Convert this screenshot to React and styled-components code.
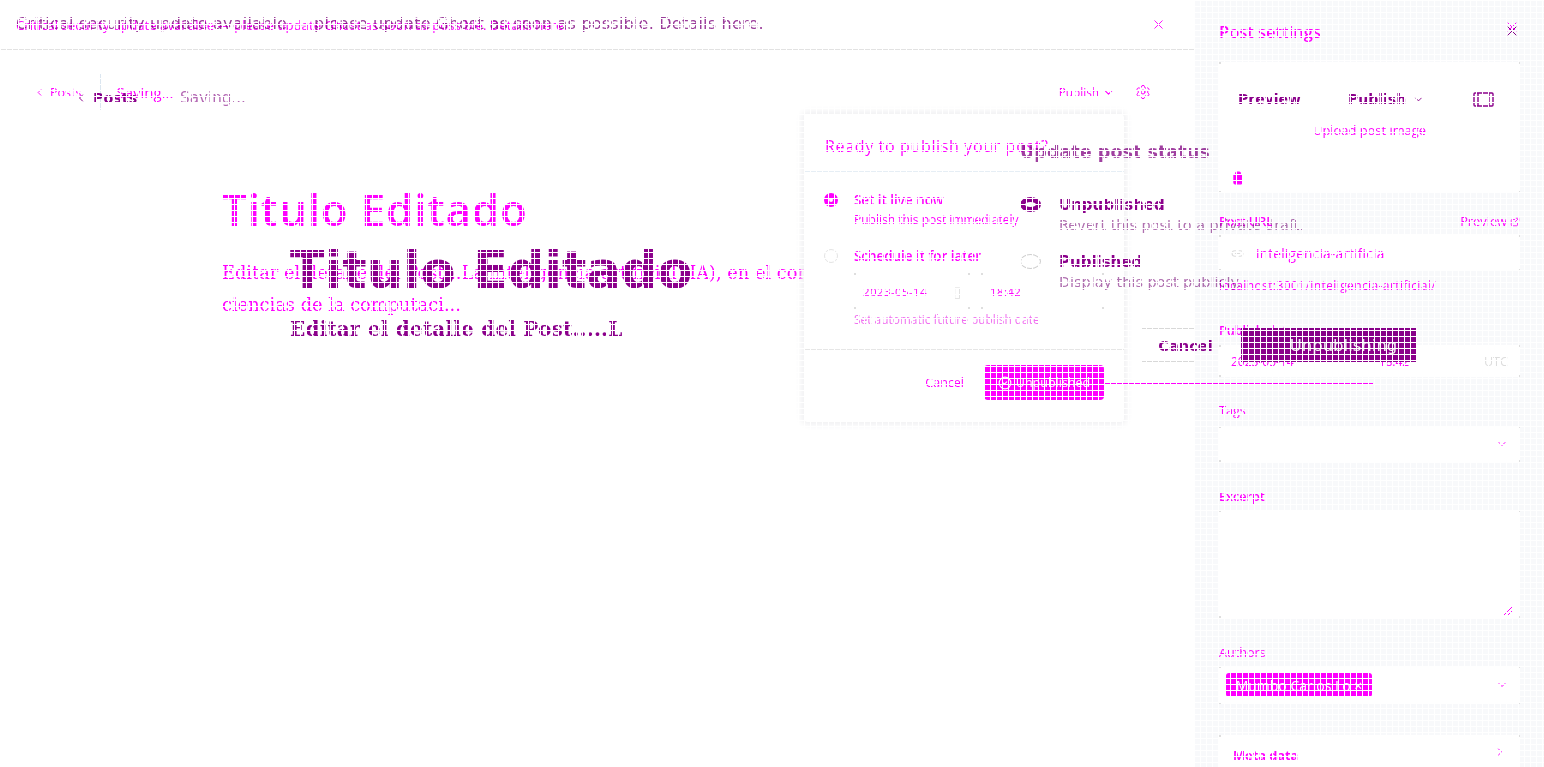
import React from 'react';
import styled, { createGlobalStyle, css } from 'styled-components';
import { X, ChevronDown, ChevronRight, ChevronLeft, Settings, Link2, Trash, ExternalLink, CheckCircle2 } from 'lucide-react';

const MAGENTA = '#ff00ff';
const PURPLE = '#8b008b';
const SANS = '"Open Sans", "Noto Sans", sans-serif';
const WIDE = '"DejaVu Sans", sans-serif';
const SERIF = '"DejaVu Serif", serif';

const Global = createGlobalStyle`
  html, body { margin: 0; padding: 0; background: #fff; }
  body { font-family: ${SANS}; color: ${MAGENTA}; overflow: hidden; }
`;

// little grey marks in the corners of a box, the edges themselves don't show
const cornerMarks = css`
  background-image:
    linear-gradient(#dedede, #dedede), linear-gradient(#dedede, #dedede),
    linear-gradient(#dedede, #dedede), linear-gradient(#dedede, #dedede);
  background-size: 2px 2px;
  background-repeat: no-repeat;
  background-position: left top, right top, left bottom, right bottom;
`;

const Page = styled.div`
  position: relative;
  display: grid;
  grid-template-columns: 1194px 350px;
  width: 1544px;
  height: 767px;
  overflow: hidden;
`;

// the picture is cut by a white 6px lattice, it lies over everything
const Lattice = styled.div`
  position: absolute;
  inset: 0;
  z-index: 10;
  pointer-events: none;
  background-image:
    linear-gradient(to right, #fff 1px, transparent 1px),
    linear-gradient(to bottom, #fff 1px, transparent 1px);
  background-size: 6px 6px;
`;

const Main = styled.main`
  position: relative;
  display: flex;
  flex-direction: column;
  min-width: 0;
`;

const Banner = styled.div`
  display: flex;
  align-items: center;
  justify-content: space-between;
  height: 49px;
  padding: 0 28px 0 16px;
  border-bottom: 1px solid #e2e2e2;
  font-size: 13.2px;
`;

const Toolbar = styled.div`
  display: flex;
  align-items: center;
  height: 36px;
  margin-top: 24px;
  padding: 0 43px 0 34px;
  font-size: 12.5px;
`;

const BackLink = styled.span`
  display: flex;
  align-items: center;
  gap: 5px;
  padding-right: 19px;
  height: 36px;
  border-right: 1px solid #dbe6f0;
`;

const Status = styled.span`
  margin-left: 15px;
  flex: 1;
  font-size: 15px;
`;

const PublishMenu = styled.span`
  display: flex;
  align-items: center;
  gap: 3px;
  margin-right: 20px;
  font-size: 11.8px;
`;

const Editor = styled.div`
  padding: 75px 0 0 222px;
`;

const Title = styled.h1`
  margin: 0;
  font-size: 44px;
  font-weight: 600;
  line-height: 48px;
  letter-spacing: 0.8px;
`;

const Body = styled.p`
  margin: 24px 0 0;
  width: 720px;
  font-family: ${SERIF};
  font-size: 17.8px;
  line-height: 32px;
`;

const Popover = styled.section`
  position: absolute;
  left: 804px;
  top: 114px;
  width: 320px;
  height: 308px;
  background: #fff;
  border-radius: 4px;
  box-shadow: 0 0 6px 3px #f1f1f3;
`;

const PopoverHead = styled.h2`
  margin: 0;
  height: 58px;
  padding: 21px 21px 0;
  box-sizing: border-box;
  font-size: 16px;
  font-weight: 400;
  letter-spacing: 0.65px;
  border-bottom: 1px solid #e6eef5;
`;

const PopoverBody = styled.div`
  display: flex;
  flex-direction: column;
  height: 178px;
  padding: 20px 20px 0;
  box-sizing: border-box;
  border-bottom: 1px solid #e6e6e6;
`;

const Option = styled.div`
  display: grid;
  grid-template-columns: 14px 1fr;
  column-gap: 16px;
  margin-bottom: 20px;
`;

const Radio = styled.span`
  width: 14px;
  height: 14px;
  margin-top: 1px;
  box-sizing: border-box;
  border-radius: 50%;
  border: ${p => (p.$on ? `5px solid ${MAGENTA}` : '1px solid #e4e4e4')};
`;

const OptionTitle = styled.div`
  font-size: 13.4px;
  font-weight: 600;
  line-height: 16px;
`;

const OptionNote = styled.div`
  margin-top: 4px;
  font-size: 12px;
  line-height: 16px;
`;

const DateRow = styled.div`
  display: flex;
  gap: 11px;
  margin-top: 9px;
  width: 250px;
  font-size: 11.5px;
`;

const DateBox = styled.span`
  ${cornerMarks}
  display: flex;
  align-items: center;
  justify-content: space-between;
  width: 116px;
  height: 36px;
  padding: 0 9px;
  box-sizing: border-box;
  letter-spacing: 0.4px;
`;

const DateIcon = styled.span`
  color: #ddd;
  font-size: 15px;
`;

const TimeBox = styled.span`
  ${cornerMarks}
  flex: 1;
  display: flex;
  align-items: center;
  height: 36px;
  padding-left: 9px;
  letter-spacing: 0.4px;
`;

const Hint = styled.div`
  margin-top: 3px;
  font-size: 11.9px;
  line-height: 14px;
  color: #f06ff0;
`;

const PopoverFoot = styled.div`
  display: flex;
  align-items: center;
  justify-content: flex-end;
  gap: 20px;
  padding: 15px 20px;
  font-size: 12.5px;
`;

const SolidButton = styled.span`
  display: flex;
  align-items: center;
  justify-content: center;
  gap: 4px;
  width: 120px;
  height: 35px;
  border-radius: 4px;
  background: ${MAGENTA};
  color: #fff;
`;

const Rule = styled.div`
  position: absolute;
  left: 1104px;
  top: 383px;
  width: 269px;
  height: 1px;
  background: ${MAGENTA};
`;

const Sidebar = styled.aside`
  display: flex;
  flex-direction: column;
  padding: 0 24px 0 25px;
  background: #f8f9fb;
  font-size: 12.6px;
`;

const SideHead = styled.div`
  display: flex;
  align-items: center;
  justify-content: space-between;
  height: 62px;
  font-size: 16.5px;
  font-weight: 600;
`;

const SideClose = styled.span`
  display: flex;
  margin-top: -8px;
`;

const ImageCard = styled.div`
  ${cornerMarks}
  display: flex;
  flex-direction: column;
  align-items: center;
  height: 131px;
  padding: 59px 12px 0;
  box-sizing: border-box;
  background-color: #fff;
  font-size: 12.9px;
`;

const TrashSlot = styled.span`
  align-self: flex-start;
  display: flex;
  margin-top: 32px;
`;

const LabelRow = styled.div`
  display: flex;
  justify-content: space-between;
  margin-top: ${p => p.$gap || 0}px;
  height: 17px;
  line-height: 17px;
  font-weight: ${p => (p.$bold ? 600 : 400)};
`;

const PreviewLink = styled.span`
  display: flex;
  align-items: center;
  gap: 3px;
  font-weight: 400;
  font-size: 12.8px;
`;

const Field = styled.div`
  ${cornerMarks}
  display: flex;
  align-items: center;
  justify-content: space-between;
  height: ${p => p.$h}px;
  margin-top: ${p => p.$top || 0}px;
  padding: 0 12px;
  box-sizing: border-box;
  background-color: #fff;
`;

const Slug = styled.span`
  display: flex;
  align-items: center;
  gap: 12px;
  font-size: 13.7px;
  letter-spacing: 0.2px;
`;

const Url = styled.div`
  margin-top: 7px;
  font-size: 12px;
  line-height: 16px;
  letter-spacing: 0.4px;
`;

const DateSide = styled.div`
  display: flex;
  gap: 85px;
  font-size: 12px;
`;

const Chip = styled.span`
  display: flex;
  align-items: center;
  justify-content: center;
  width: 146px;
  height: 24px;
  margin-left: -5px;
  border-radius: 3px;
  background: ${MAGENTA};
  color: #fff;
  font-size: 14px;
`;

const Utc = styled.span`
  color: #ddd;
`;

const Grip = styled.svg`
  align-self: flex-end;
  margin: 0 -5px 2px 0;
`;

const MetaCard = styled(Field)`
  font-size: 12.8px;
  font-weight: 700;
  padding: 11px 14px 0;
  align-items: flex-start;
`;

// second picture, laid over the first one and multiplied with it
const Ghost = styled.div`
  position: absolute;
  inset: 0;
  z-index: 5;
  mix-blend-mode: multiply;
  color: ${PURPLE};
  font-family: ${WIDE};
`;

const GhostBanner = styled.div`
  height: 49px;
  padding-left: 16px;
  font-size: 16px;
  letter-spacing: 0.22px;
  line-height: 48px;
  color: #9a3c9a;
`;

const GhostBar = styled.div`
  display: flex;
  align-items: center;
  height: 20px;
  margin-top: 39px;
  padding-left: 75px;
`;

const GhostBack = styled.span`
  display: flex;
  align-items: center;
  gap: 6px;
  width: 105px;
  font-size: 14.3px;
  font-weight: 700;
`;

const GhostSaving = styled.span`
  color: #b46ab4;
  font-size: 15.2px;
  font-weight: 400;
`;

const GhostEditor = styled.div`
  padding: 134px 0 0 290px;
`;

const GhostTitle = styled.h1`
  margin: 0;
  font-size: 51px;
  line-height: 58px;
  font-weight: 700;
`;

const GhostBody = styled.p`
  margin: 16px 0 0;
  font-family: ${SERIF};
  font-size: 20px;
  font-weight: 700;
  letter-spacing: 0.2px;
  line-height: 26px;
`;

const Dialog = styled.section`
  position: absolute;
  left: 1020px;
  top: 141px;
  width: 400px;
`;

const DialogTitle = styled.h2`
  margin: 0;
  font-size: 17.6px;
  font-weight: 700;
  line-height: 22px;
  color: #a040a0;
`;

const DialogOption = styled.div`
  display: grid;
  grid-template-columns: 21px 1fr;
  column-gap: 18px;
  margin-top: ${p => p.$top}px;
`;

const GhostRadio = styled.span`
  width: 21px;
  height: 15px;
  margin-top: 2px;
  box-sizing: border-box;
  border-radius: 50%;
  border: ${p => (p.$on ? `5px solid ${PURPLE}` : '1px solid #cfcfcf')};
`;

const DialogOptionTitle = styled.div`
  font-size: 15px;
  font-weight: 700;
  line-height: 20px;
`;

const DialogOptionNote = styled.div`
  margin-top: 1px;
  font-size: 14.4px;
  line-height: 18px;
  color: #b070b0;
`;

const DialogFoot = styled.div`
  display: flex;
  align-items: center;
  margin-top: 37px;
  margin-left: 122px;
`;

const OutlineButton = styled.span`
  display: flex;
  align-items: center;
  justify-content: center;
  width: 99px;
  height: 34px;
  padding-right: 12px;
  box-sizing: border-box;
  background-image: linear-gradient(#d8d8d8, #d8d8d8), linear-gradient(#d8d8d8, #d8d8d8);
  background-size: 52px 1px;
  background-repeat: no-repeat;
  background-position: left top, left bottom;
  font-size: 14.6px;
  font-weight: 700;
`;

const DarkButton = styled.span`
  display: flex;
  align-items: center;
  justify-content: center;
  width: 175px;
  height: 34px;
  padding-left: 30px;
  box-sizing: border-box;
  background: ${PURPLE};
  color: #f2f2f2;
  font-size: 16.5px;
`;

const SideActions = styled.div`
  position: absolute;
  left: 1238px;
  top: 91px;
  display: flex;
  align-items: center;
  font-size: 14px;
  font-weight: 700;
`;

const SideAction = styled.span`
  display: flex;
  align-items: center;
  gap: 7px;
  width: ${p => p.$w}px;
`;

const GhostClose = styled.span`
  position: absolute;
  left: 1504px;
  top: 23px;
  display: flex;
`;

const PanelIcon = () => (
  <svg width="21" height="15" viewBox="0 0 21 15" fill="none" stroke={PURPLE} strokeWidth="1.4">
    <rect x="1" y="1" width="19" height="13" rx="1" />
    <path d="M5 1v13M16 1v13" />
  </svg>
);

export default function App() {
  return (
    <Page>
      <Global />
      <Main>
        <Banner>
          <span>Critical security update available — please update Ghost as soon as possible. Details here.</span>
          <X size={15} strokeWidth={1.5} />
        </Banner>
        <Toolbar>
          <BackLink><ChevronLeft size={11} />Posts</BackLink>
          <Status>Saving...</Status>
          <PublishMenu>Publish <ChevronDown size={13} /></PublishMenu>
          <Settings size={16} strokeWidth={1.5} />
        </Toolbar>
        <Editor>
          <Title>Titulo Editado</Title>
          <Body>Editar el detalle del Post...La inteligencia artificial (IA), en el contexto de las ciencias de la computaci...</Body>
        </Editor>
        <Popover>
          <PopoverHead>Ready to publish your post?</PopoverHead>
          <PopoverBody>
            <Option>
              <Radio $on />
              <div>
                <OptionTitle>Set it live now</OptionTitle>
                <OptionNote>Publish this post immediately</OptionNote>
              </div>
            </Option>
            <Option>
              <Radio />
              <div>
                <OptionTitle>Schedule it for later</OptionTitle>
                <DateRow>
                  <DateBox>2023-05-14<DateIcon>▯</DateIcon></DateBox>
                  <TimeBox>18:42</TimeBox>
                </DateRow>
                <Hint>Set automatic future publish date</Hint>
              </div>
            </Option>
          </PopoverBody>
          <PopoverFoot>
            <span>Cancel</span>
            <SolidButton><CheckCircle2 size={14} />Unpublished</SolidButton>
          </PopoverFoot>
        </Popover>
      </Main>
      <Sidebar>
        <SideHead>
          Post settings
          <SideClose><X size={16} strokeWidth={1.5} /></SideClose>
        </SideHead>
        <ImageCard>
          Upload post image
          <TrashSlot><Trash size={14} strokeWidth={2} fill={MAGENTA} /></TrashSlot>
        </ImageCard>
        <LabelRow $gap={20} $bold>
          Post URL
          <PreviewLink>Preview <ExternalLink size={10} /></PreviewLink>
        </LabelRow>
        <Field $h={36} $top={5}>
          <Slug><Link2 size={13} color="#ddd" />inteligencia-artificia</Slug>
        </Field>
        <Url>localhost:3001/inteligencia-artificial/</Url>
        <LabelRow $gap={28} $bold>Publish date</LabelRow>
        <Field $h={32} $top={6}>
          <DateSide><span>2023-05-14</span><span>18:42</span></DateSide>
          <Utc>UTC</Utc>
        </Field>
        <LabelRow $gap={25}>Tags</LabelRow>
        <Field $h={36} $top={7}>
          <span />
          <ChevronDown size={12} />
        </Field>
        <LabelRow $gap={26} $bold>Excerpt</LabelRow>
        <Field $h={108} $top={5}>
          <span />
          <Grip width="10" height="10" viewBox="0 0 10 10" stroke={MAGENTA} fill="none"><path d="M1 9 9 1M5 9l4-4" /></Grip>
        </Field>
        <LabelRow $gap={26}>Authors</LabelRow>
        <Field $h={38} $top={5}>
          <Chip>Mumbo Carlos Lo ×</Chip>
          <ChevronDown size={12} />
        </Field>
        <MetaCard $h={40} $top={31}>
          Meta data
          <ChevronRight size={12} />
        </MetaCard>
      </Sidebar>
      <Rule />
      <Ghost>
        <GhostBanner>Critical security update available — please update Ghost as soon as possible. Details here.</GhostBanner>
        <GhostBar>
          <GhostBack><ChevronLeft size={12} />Posts</GhostBack>
          <GhostSaving>Saving...</GhostSaving>
        </GhostBar>
        <GhostEditor>
          <GhostTitle>Titulo Editado</GhostTitle>
          <GhostBody>Editar el detalle del Post.....L</GhostBody>
        </GhostEditor>
        <Dialog>
          <DialogTitle>Update post status</DialogTitle>
          <DialogOption $top={32}>
            <GhostRadio $on />
            <div>
              <DialogOptionTitle>Unpublished</DialogOptionTitle>
              <DialogOptionNote>Revert this post to a private draft.</DialogOptionNote>
            </div>
          </DialogOption>
          <DialogOption $top={18}>
            <GhostRadio />
            <div>
              <DialogOptionTitle>Published</DialogOptionTitle>
              <DialogOptionNote>Display this post publicly.</DialogOptionNote>
            </div>
          </DialogOption>
          <DialogFoot>
            <OutlineButton>Cancel</OutlineButton>
            <DarkButton>Unpublishing</DarkButton>
          </DialogFoot>
        </Dialog>
        <SideActions>
          <SideAction $w={110}>Preview</SideAction>
          <SideAction $w={125}>Publish <ChevronDown size={11} /></SideAction>
          <PanelIcon />
        </SideActions>
        <GhostClose><X size={16} strokeWidth={1.5} /></GhostClose>
      </Ghost>
      <Lattice />
    </Page>
  );
}
